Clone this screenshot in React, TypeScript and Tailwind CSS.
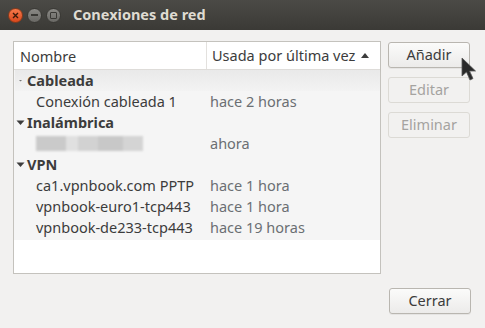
import React from "react";

const font = { fontFamily: '"Noto Sans", "Open Sans", sans-serif' };

function Row({ name, time, indent = true }: { name: React.ReactNode; time: string; indent?: boolean }) {
  return (
    <div className="flex h-[21px] items-center text-[14.5px] text-[#3c3c3c]">
      <div className={`w-[194px] ${indent ? "pl-[21px]" : ""}`}>{name}</div>
      <div className="pl-[1px] text-[#6b6f73]">{time}</div>
    </div>
  );
}

function Group({ label, tiny = false }: { label: string; tiny?: boolean }) {
  return (
    <div className="flex h-[21px] items-center text-[14.5px] font-bold text-[#3c3c3c]">
      <div className="flex w-[11px] items-center justify-center">
        {tiny ? (
          <svg width="6" height="4" viewBox="0 0 6 4"><path d="M1 1h3l-1.5 1.5z" fill="#777" /></svg>
        ) : (
          <svg width="9" height="6" viewBox="0 0 9 6"><path d="M0.5 0.5h8L4.5 5z" fill="#3c3c3c" /></svg>
        )}
      </div>
      <div className="pl-[1px]">{label}</div>
    </div>
  );
}

function Btn({ children, disabled = false }: { children: React.ReactNode; disabled?: boolean }) {
  return (
    <div
      className={`flex h-[26px] w-[82px] items-center justify-center rounded-[3px] border text-[14.5px] ${
        disabled
          ? "border-[#dcdad5] bg-[#f2f1f0] text-[#a5a3a0]"
          : "border-[#b9b6b0] bg-gradient-to-b from-[#fbfbfa] to-[#ecebea] text-[#3c3c3c] shadow-[0_1px_0_rgba(0,0,0,0.05)]"
      }`}
    >
      {children}
    </div>
  );
}

export default function App() {
  return (
    <div className="relative h-[328px] w-[485px] overflow-hidden bg-[#f2f1f0]" style={font}>
      {/* title bar */}
      <div className="flex h-[30px] items-center bg-gradient-to-b from-[#4b4a46] to-[#3b3a36] pl-[8px]">
        <div className="flex items-center gap-[4px]">
          <div className="flex h-[15px] w-[15px] items-center justify-center rounded-full border border-[#8a3a1a] bg-gradient-to-b from-[#f7794a] to-[#d9471b]">
            <svg width="7" height="7" viewBox="0 0 7 7"><path d="M1 1l5 5M6 1L1 6" stroke="#3a1a0a" strokeWidth="1.4" /></svg>
          </div>
          <div className="flex h-[15px] w-[15px] items-center justify-center rounded-full border border-[#3a3935] bg-gradient-to-b from-[#8a8985] to-[#6a6965]">
            <div className="h-[2px] w-[7px] bg-[#3a3935]" />
          </div>
          <div className="flex h-[15px] w-[15px] items-center justify-center rounded-full border border-[#3a3935] bg-gradient-to-b from-[#8a8985] to-[#6a6965]">
            <div className="h-[7px] w-[7px] rounded-[1px] border-[1.5px] border-[#3a3935]" />
          </div>
        </div>
        <div className="ml-[12px] text-[14.5px] font-bold text-[#dfdbd2]">Conexiones de red</div>
      </div>

      {/* body */}
      <div className="flex pl-[13px] pr-[14px] pt-[11px]">
        <div className="flex h-[233px] w-[368px] flex-col border border-[#c4c2bd] bg-white">
          <div className="flex h-[28px] items-center border-b border-[#dedcd9] bg-white text-[14.5px] text-[#3c3c3c] shadow-[0_2px_2px_rgba(0,0,0,0.04)]">
            <div className="h-full w-[193px] border-r border-[#e3e1de] pl-[6px] leading-[28px]">Nombre</div>
            <div className="flex items-center pl-[5px]">
              Usada por última vez
              <svg className="ml-[6px]" width="8" height="5" viewBox="0 0 8 5"><path d="M0 5h8L4 0z" fill="#3c3c3c" /></svg>
            </div>
          </div>
          <div className="bg-[#f5f5f5] pl-[1px]">
            <div className="bg-gradient-to-b from-[#e9e9e9] to-[#f3f3f3]">
              <Group label="Cableada" tiny />
            </div>
            <Row name="Conexión cableada 1" time="hace 2 horas" />
            <Group label="Inalámbrica" />
            <Row
              name={
                <div className="flex h-[15px] w-[107px] blur-[1.2px]">
                  <div className="h-full w-[30px] bg-[#cacaca]" />
                  <div className="h-full w-[12px] bg-[#e0e0e0]" />
                  <div className="h-full w-[20px] bg-[#d2d2d2]" />
                  <div className="h-full w-[25px] bg-[#c8c8c8]" />
                  <div className="h-full w-[20px] bg-[#d4d4d4]" />
                </div>
              }
              time="ahora"
            />
            <Group label="VPN" />
            <Row name="ca1.vpnbook.com PPTP" time="hace 1 hora" />
            <Row name="vpnbook-euro1-tcp443" time="hace 1 hora" />
            <Row name="vpnbook-de233-tcp443" time="hace 19 horas" />
            <div className="h-[2px]" />
          </div>
        </div>
        <div className="ml-[7px] flex flex-col gap-[9px] pt-[1px]">
          <Btn>Añadir</Btn>
          <Btn disabled>Editar</Btn>
          <Btn disabled>Eliminar</Btn>
        </div>
      </div>
      <div className="flex justify-end pr-[14px] pt-[14px]">
        <Btn>Cerrar</Btn>
      </div>

      {/* mouse cursor */}
      <svg className="absolute left-[461px] top-[57px]" width="18" height="24" viewBox="0 0 18 24">
        <path d="M1 1 L1 19 L5.5 15 L9 23 L12 21.5 L8.5 14 L14.5 14 Z" fill="#2a2a2a" stroke="#555" strokeWidth="0.8" />
      </svg>
    </div>
  );
}
